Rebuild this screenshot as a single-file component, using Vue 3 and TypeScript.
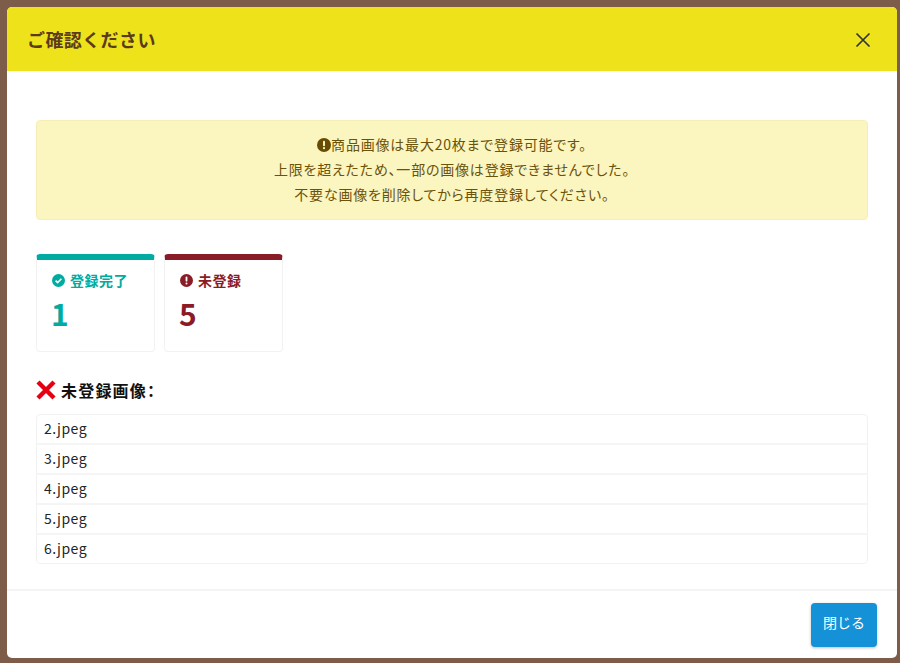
<script setup lang="ts">
const files: string[] = ['2.jpeg', '3.jpeg', '4.jpeg', '5.jpeg', '6.jpeg']
const notice: string[] = [
  '上限を超えたため、一部の画像は登録できませんでした。',
  '不要な画像を削除してから再度登録してください。',
]
</script>

<template>
  <div class="backdrop">
    <section class="modal">
      <header class="head">
        <h1 class="title">ご確認ください</h1>
        <button class="close" type="button" aria-label="close">
          <svg width="16" height="16" viewBox="0 0 16 16"><path d="M1.5 1.5 14.5 14.5M14.5 1.5 1.5 14.5" stroke="#2f3437" stroke-width="1.7" fill="none" /></svg>
        </button>
      </header>
      <div class="body">
        <div class="alert">
          <p class="line">
            <svg class="alert-icon" width="14" height="14" viewBox="0 0 14 14"><circle cx="7" cy="7" r="7" fill="#664d03" /><rect x="6" y="2.8" width="2" height="5.4" rx="1" fill="#fbf4bf" /><circle cx="7" cy="10.2" r="1.1" fill="#fbf4bf" /></svg>商品画像は最大20枚まで登録可能です。
          </p>
          <p v-for="l in notice" :key="l" class="line">{{ l }}</p>
        </div>
        <div class="cards">
          <div class="card ok">
            <div class="label">
              <svg width="13" height="13" viewBox="0 0 13 13"><circle cx="6.5" cy="6.5" r="6.5" fill="#00ab9f" /><path d="M3.6 6.7 5.6 8.6 9.4 4.8" stroke="#fff" stroke-width="1.6" fill="none" /></svg>
              <span>登録完了</span>
            </div>
            <div class="num">1</div>
          </div>
          <div class="card ng">
            <div class="label">
              <svg width="13" height="13" viewBox="0 0 13 13"><circle cx="6.5" cy="6.5" r="6.5" fill="#8a1c28" /><rect x="5.6" y="2.6" width="1.8" height="5" rx=".9" fill="#fff" /><circle cx="6.5" cy="9.6" r="1" fill="#fff" /></svg>
              <span>未登録</span>
            </div>
            <div class="num">5</div>
          </div>
        </div>
        <h2 class="sub">
          <svg width="20" height="20" viewBox="0 0 20 20"><path d="M2 2 18 18M18 2 2 18" stroke="#e60012" stroke-width="4.4" fill="none" /></svg>
          <span>未登録画像：</span>
        </h2>
        <ul class="list">
          <li v-for="f in files" :key="f" class="row">{{ f }}</li>
        </ul>
      </div>
      <footer class="foot">
        <button class="btn" type="button">閉じる</button>
      </footer>
    </section>
  </div>
</template>

<style>
html, body { margin: 0; background: #7d5c49; }
</style>

<style scoped>
* { box-sizing: border-box; }
.backdrop {
  width: 900px;
  height: 663px;
  padding: 7px 3px 5px 7px;
  background: #7d5c49;
  font-family: "Noto Sans CJK JP", "Noto Sans", sans-serif;
  overflow: hidden;
}
.modal {
  height: 651px;
  display: flex;
  flex-direction: column;
  background: #fff;
  border-radius: 5px;
  overflow: hidden;
}
.head {
  height: 64px;
  flex: none;
  display: flex;
  align-items: center;
  justify-content: space-between;
  padding: 2px 26px 0 20px;
  background: #eee21b;
}
.title {
  margin: 0;
  font-size: 18px;
  font-weight: 700;
  color: #5b3a1e;
  line-height: 1.2;
  letter-spacing: .4px;
}
.close {
  display: flex;
  padding: 0;
  border: 0;
  background: none;
}
.body {
  flex: 1;
  padding: 49px 29px 0;
}
.alert {
  height: 100px;
  padding: 11px 16px;
  background: #fbf5c0;
  border: 1px solid #f6eeb6;
  border-radius: 4px;
  text-align: center;
  color: #6b5208;
  font-size: 14px;
  font-feature-settings: "palt";
  letter-spacing: .8px;
}
.line {
  margin: 0;
  height: 25px;
  line-height: 25px;
}
.alert-icon { vertical-align: -2px; }
.cards {
  display: flex;
  gap: 9px;
  margin-top: 34px;
}
.card {
  width: 119px;
  height: 98px;
  padding: 10px 15px;
  border: 1px solid #f2f2f2;
  border-top: 6px solid;
  border-radius: 4px;
}
.ok { border-top-color: #00ab9f; color: #00ab9f; }
.ng { border-top-color: #8a1c28; color: #8a1c28; }
.label {
  display: flex;
  align-items: center;
  gap: 5px;
  font-size: 14px;
  font-weight: 700;
  line-height: 20px;
  letter-spacing: .5px;
}
.num {
  margin-top: 3px;
  margin-left: -1px;
  font-size: 30px;
  font-weight: 700;
  line-height: 40px;
}
.sub {
  display: flex;
  align-items: center;
  gap: 5px;
  height: 24px;
  margin: 26px 0 12px;
  font-size: 16px;
  font-weight: 700;
  color: #111;
  font-feature-settings: "palt";
  letter-spacing: 1.2px;
}
.list {
  margin: 0;
  padding: 0;
  list-style: none;
  border: 1px solid #f2f2f2;
  border-radius: 4px;
}
.row {
  height: 30px;
  padding: 0 7px;
  line-height: 27px;
  font-size: 14px;
  color: #212529;
  letter-spacing: .5px;
  border-bottom: 2px solid #f5f5f5;
}
.row:last-child { height: 28px; border-bottom: 0; }
.foot {
  height: 69px;
  flex: none;
  display: flex;
  justify-content: flex-end;
  align-items: flex-start;
  padding: 12px 20px 0 0;
  border-top: 2px solid #f4f4f4;
}
.btn {
  width: 66px;
  height: 44px;
  padding: 0 0 6px;
  border: 0;
  border-radius: 4px;
  background: #1591d8;
  color: #fff;
  font-family: inherit;
  font-size: 14px;
  box-shadow: 0 1px 3px rgba(0, 0, 0, .25);
}
</style>
